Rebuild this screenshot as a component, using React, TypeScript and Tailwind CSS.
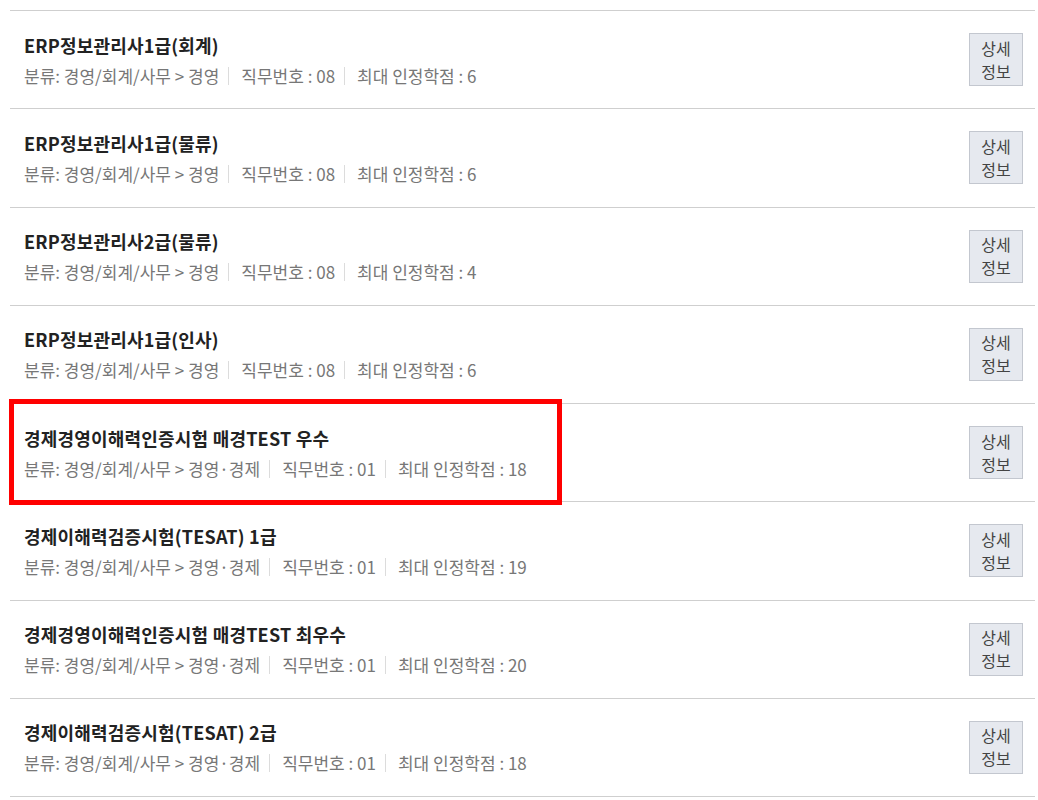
import React from 'react';

interface Course {
  title: string;
  category: string;
  jobNo: string;
  credits: string;
  highlight?: boolean;
}

const courses: Course[] = [
  { title: 'ERP정보관리사1급(회계)', category: '경영/회계/사무 > 경영', jobNo: '08', credits: '6' },
  { title: 'ERP정보관리사1급(물류)', category: '경영/회계/사무 > 경영', jobNo: '08', credits: '6' },
  { title: 'ERP정보관리사2급(물류)', category: '경영/회계/사무 > 경영', jobNo: '08', credits: '4' },
  { title: 'ERP정보관리사1급(인사)', category: '경영/회계/사무 > 경영', jobNo: '08', credits: '6' },
  {
    title: '경제경영이해력인증시험 매경TEST 우수',
    category: '경영/회계/사무 > 경영·경제',
    jobNo: '01',
    credits: '18',
    highlight: true,
  },
  { title: '경제이해력검증시험(TESAT) 1급', category: '경영/회계/사무 > 경영·경제', jobNo: '01', credits: '19' },
  { title: '경제경영이해력인증시험 매경TEST 최우수', category: '경영/회계/사무 > 경영·경제', jobNo: '01', credits: '20' },
  { title: '경제이해력검증시험(TESAT) 2급', category: '경영/회계/사무 > 경영·경제', jobNo: '01', credits: '18' },
];

function Divider() {
  return <span className="ml-[9px] mr-[12px] inline-block h-[18px] w-px bg-[#dcdcdc]" />;
}

function CourseRow({ course }: { course: Course }) {
  return (
    <li className="relative flex h-[98.25px] items-center border-b border-[#cfcfcf] pl-[14px] pr-[12px]">
      <div className="flex flex-1 flex-col gap-[6px]">
        <h3 className="text-[18px] font-bold leading-[26px] tracking-[0.2px] text-[#222]">
          {course.title}
        </h3>
        <p className="flex items-center text-[17px] leading-[24px] tracking-[0px] text-[#777]">
          <span>분류: {course.category}</span>
          <Divider />
          <span>직무번호 : {course.jobNo}</span>
          <Divider />
          <span>최대 인정학점 : {course.credits}</span>
        </p>
      </div>
      <button className="flex h-[53px] w-[54px] flex-col items-center justify-center border border-[#c3c7cf] bg-[#e6e9ef] text-[16px] leading-[23px] text-[#444]">
        <span>상세</span>
        <span>정보</span>
      </button>
      {course.highlight && (
        <div className="pointer-events-none absolute left-[-1px] top-[-5px] h-[106px] w-[553px] border-[5px] border-[#ff0000]" />
      )}
    </li>
  );
}

export default function App() {
  return (
    <div
      className="min-h-[800px] bg-white pt-[10px] pl-[10px] pr-[3px]"
      style={{ fontFamily: '"Noto Sans CJK KR", "Noto Sans", sans-serif' }}
    >
      <ul className="border-t border-[#cfcfcf]">
        {courses.map((c, i) => (
          <CourseRow key={i} course={c} />
        ))}
      </ul>
    </div>
  );
}
